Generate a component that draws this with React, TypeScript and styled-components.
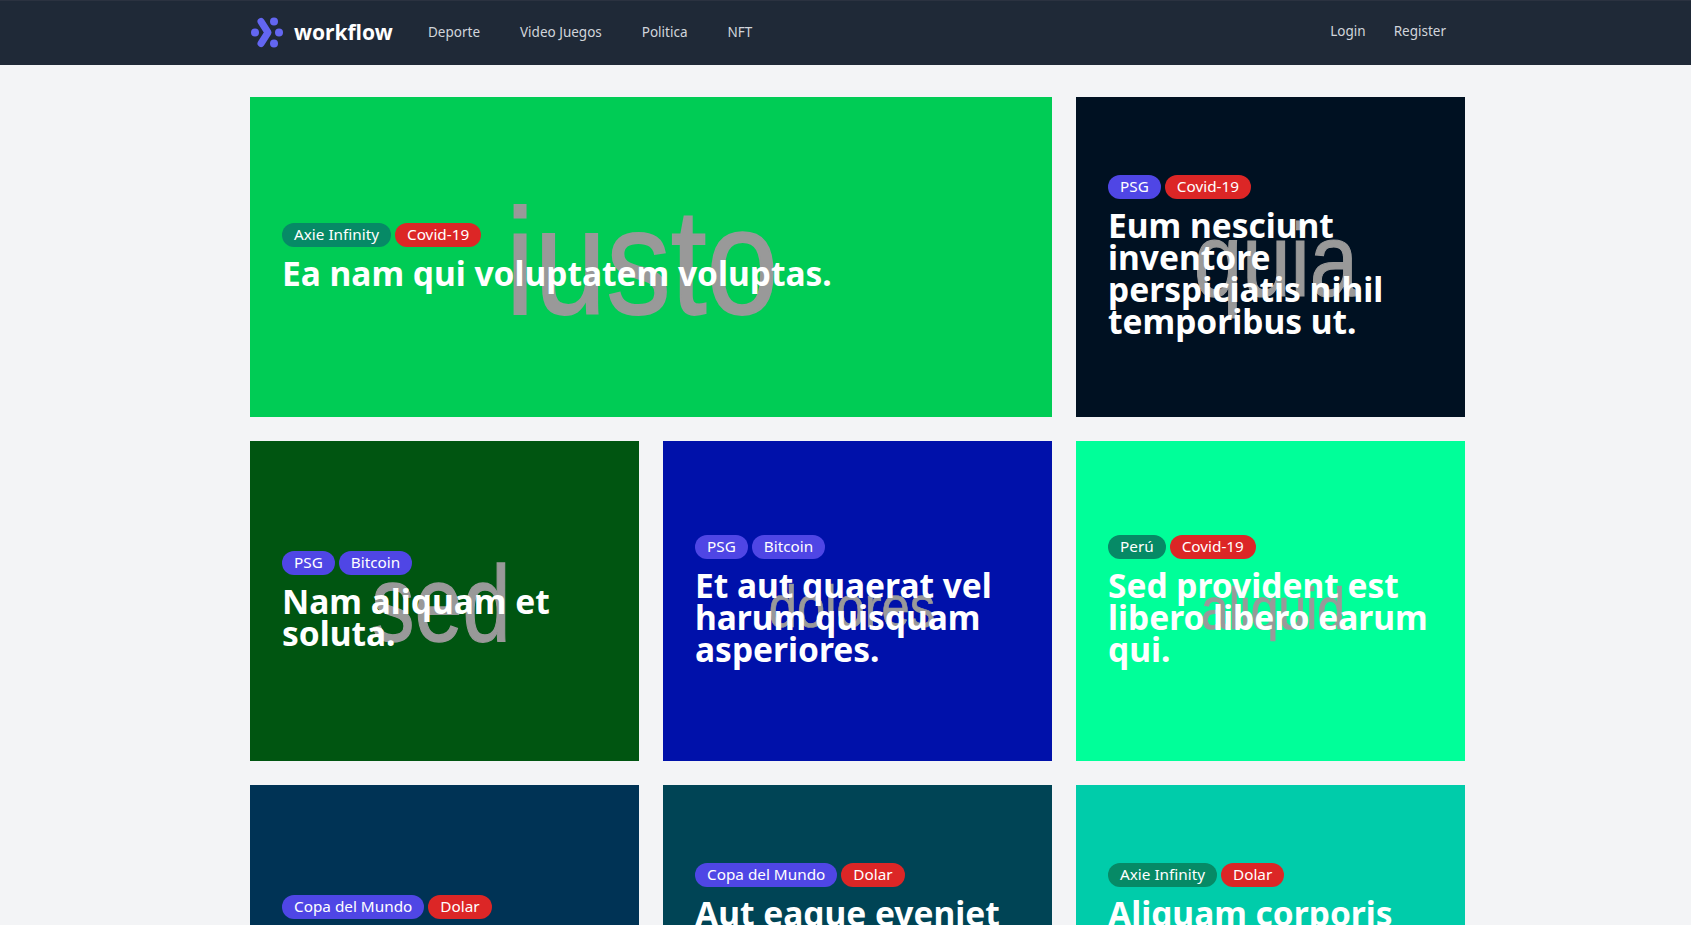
import styled, { createGlobalStyle } from "styled-components";

interface Post {
  word?: string;
  wordSize?: number;
  wordScale?: number;
  dx?: number;
  dy?: number;
  bg: string;
  wide?: boolean;
  tags: { label: string; color: string }[];
  title: string;
}

const GREEN = "#068a66";
const INDIGO = "#4f46e5";
const RED = "#dc2626";

const posts: Post[] = [
  {
    word: "iusto", wordSize: 150, wordScale: 0.86, dx: -9, dy: 5, bg: "#00cc55", wide: true,
    tags: [{ label: "Axie Infinity", color: GREEN }, { label: "Covid-19", color: RED }],
    title: "Ea nam qui voluptatem voluptas.",
  },
  {
    word: "quia", wordSize: 103, wordScale: 0.845, dx: 5, dy: 3, bg: "#001122",
    tags: [{ label: "PSG", color: INDIGO }, { label: "Covid-19", color: RED }],
    title: "Eum nesciunt inventore perspiciatis nihil temporibus ut.",
  },
  {
    word: "sed", wordSize: 108, wordScale: 0.8, dx: -4, dy: 3, bg: "#005511",
    tags: [{ label: "PSG", color: INDIGO }, { label: "Bitcoin", color: INDIGO }],
    title: "Nam aliquam et soluta.",
  },
  {
    word: "dolores", wordSize: 60, wordScale: 0.845, dx: -6, dy: 6, bg: "#0011aa",
    tags: [{ label: "PSG", color: INDIGO }, { label: "Bitcoin", color: INDIGO }],
    title: "Et aut quaerat vel harum quisquam asperiores.",
  },
  {
    word: "aliquid", wordSize: 60, wordScale: 0.83, dx: 2, dy: 8, bg: "#00ff99",
    tags: [{ label: "Perú", color: GREEN }, { label: "Covid-19", color: RED }],
    title: "Sed provident est libero libero earum qui.",
  },
  {
    bg: "#003355",
    tags: [{ label: "Copa del Mundo", color: INDIGO }, { label: "Dolar", color: RED }],
    title: "Quia sint voluptas nobis.",
  },
  {
    bg: "#004455",
    tags: [{ label: "Copa del Mundo", color: INDIGO }, { label: "Dolar", color: RED }],
    title: "Aut eaque eveniet voluptas nobis similique nostrum rerum.",
  },
  {
    bg: "#00ccaa",
    tags: [{ label: "Axie Infinity", color: GREEN }, { label: "Dolar", color: RED }],
    title: "Aliquam corporis perspiciatis nobis similique tempore quibusdam.",
  },
];

const GlobalStyle = createGlobalStyle`
  html, body {
    margin: 0;
    height: 100%;
    overflow: hidden;
    background: #f3f4f6;
    font-family: "Noto Sans", Arial, sans-serif;
  }
`;

const Nav = styled.nav`
  height: 65px;
  box-sizing: border-box;
  background: #1f2937;
  border-top: 1px solid #2b3240;
`;
const NavInner = styled.div`
  width: 1195px;
  height: 100%;
  margin-left: 251px;
  display: flex;
  align-items: center;
`;
const Logo = styled.a`
  display: flex;
  align-items: center;
  gap: 10px;
  width: 177px;
  margin-top: -2px;
  color: #fff;
  font-size: 21px;
  font-weight: 700;
`;
const NavLink = styled.a`
  color: #d1d5db;
  font-size: 13.5px;
  margin-top: -2px;
  margin-right: 40px;
`;
const NavRight = styled.div`
  margin-left: auto;
  display: flex;
  gap: 28px;
  margin-top: -4px;
  color: #d1d5db;
  font-size: 13.5px;
`;

const Grid = styled.main`
  width: 1215px;
  margin: 32px 0 0 250px;
  display: grid;
  grid-template-columns: repeat(3, 1fr);
  gap: 24px;
`;
const Card = styled.article<{ $bg: string; $wide?: boolean }>`
  position: relative;
  overflow: hidden;
  height: 320px;
  box-sizing: border-box;
  padding: 0 32px;
  display: flex;
  flex-direction: column;
  justify-content: center;
  background: ${(p) => p.$bg};
  grid-column: ${(p) => (p.$wide ? "span 2" : "span 1")};
`;
const Word = styled.span<{ $size: number; $scale: number; $dx: number; $dy: number }>`
  position: absolute;
  left: 50%;
  top: 50%;
  line-height: 1;
  color: #999;
  font-family: "Liberation Sans", Arial, sans-serif;
  font-size: ${(p) => p.$size}px;
  -webkit-text-stroke: ${(p) => p.$size * 0.012}px #999;
  transform: translate(-50%, -50%) translate(${(p) => p.$dx}px, ${(p) => p.$dy}px) scaleX(${(p) => p.$scale});
`;
const Tags = styled.div`
  position: relative;
  display: flex;
  gap: 4px;
`;
const Tag = styled.span<{ $color: string }>`
  height: 24px;
  padding: 0 12px;
  border-radius: 12px;
  color: #fff;
  font-size: 15.3px;
  line-height: 22px;
  background: ${(p) => p.$color};
`;
const Title = styled.h2`
  position: relative;
  margin: 12px 0 0;
  color: #fff;
  font-size: 33.5px;
  font-weight: 700;
  line-height: 32px;
  & > span {
    position: relative;
    top: -2px;
  }
`;

const LogoMark = () => (
  <svg width="33" height="33" viewBox="0 0 33 33" fill="#6366f1">
    <circle cx="4" cy="16.5" r="4" />
    <circle cx="23" cy="5.5" r="4" />
    <circle cx="28" cy="16.5" r="4" />
    <circle cx="23" cy="27.5" r="4" />
    <path d="M10 5.5 L17 16.5 L10 27.5" fill="none" stroke="#6366f1" strokeWidth="7" strokeLinecap="round" strokeLinejoin="round" />
  </svg>
);

const App = () => (
  <>
    <GlobalStyle />
    <Nav>
      <NavInner>
        <Logo><LogoMark />workflow</Logo>
        <NavLink>Deporte</NavLink>
        <NavLink>Video Juegos</NavLink>
        <NavLink>Politica</NavLink>
        <NavLink>NFT</NavLink>
        <NavRight>
          <span>Login</span>
          <span>Register</span>
        </NavRight>
      </NavInner>
    </Nav>
    <Grid>
      {posts.map((post) => (
        <Card key={post.title} $bg={post.bg} $wide={post.wide}>
          {post.word && (
            <Word $size={post.wordSize!} $scale={post.wordScale!} $dx={post.dx!} $dy={post.dy!}>
              {post.word}
            </Word>
          )}
          <Tags>
            {post.tags.map((tag) => (
              <Tag key={tag.label} $color={tag.color}>{tag.label}</Tag>
            ))}
          </Tags>
          <Title><span>{post.title}</span></Title>
        </Card>
      ))}
    </Grid>
  </>
);

export default App;
